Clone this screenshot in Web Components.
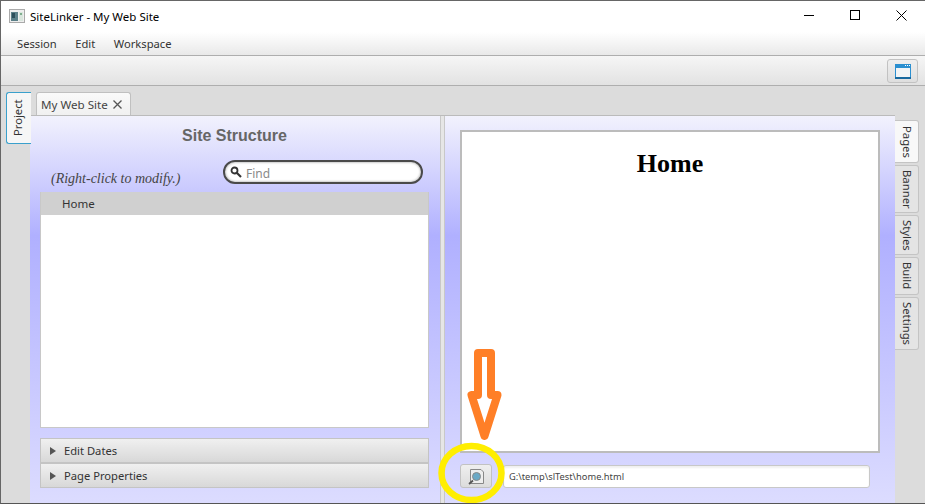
<!DOCTYPE html>
<html>
<head>
<meta charset="utf-8">
<title>SiteLinker</title>
<style>
    html, body { margin: 0; padding: 0; width: 925px; height: 504px; overflow: hidden; background: #dcdcdc; }
    body { font-family: "Noto Sans", "Open Sans", sans-serif; font-size: 12px; color: #333; }
</style>
</head>
<body>
<app-window></app-window>
<script>
function define(name, html) {
    customElements.define(name, class extends HTMLElement {
        constructor() {
            super();
            this.attachShadow({ mode: 'open' }).innerHTML = html;
        }
    });
}

define('title-bar', `
<style>
    :host { display: flex; align-items: center; height: 31px; background: #fff; color: #000; font-size: 11.5px; padding-left: 8px; padding-right: 1px; }
    .name { margin-left: 5px; flex: 1; }
    svg { display: block; }
    .logo { position: relative; top: -1px; }
    .btn { width: 46px; display: flex; justify-content: center; position: relative; top: -1px; }
</style>
<svg class="logo" width="16" height="14" viewBox="0 0 16 14">
    <rect x=".5" y=".5" width="15" height="13" fill="#eee" stroke="#aaa"/>
    <rect x="2" y="3" width="7" height="9" fill="#5b7f88"/>
    <rect x="3" y="4" width="3" height="5" fill="#2c4e5a"/>
    <rect x="10" y="3" width="4" height="9" fill="#d9e6dd"/>
    <rect x="11" y="4" width="2" height="2" fill="#7fae8f"/>
</svg>
<span class="name">SiteLinker - My Web Site</span>
<span class="btn"><svg width="11" height="11" viewBox="0 0 11 11"><path d="M0 5.5H10" stroke="#000"/></svg></span>
<span class="btn"><svg width="11" height="11" viewBox="0 0 11 11"><rect x=".5" y=".5" width="9" height="9" fill="none" stroke="#000"/></svg></span>
<span class="btn"><svg width="11" height="11" viewBox="0 0 11 11"><path d="M.5 .5L10.5 10.5M10.5 .5L.5 10.5" stroke="#000" fill="none"/></svg></span>
`);

define('menu-bar', `
<style>
    :host { display: flex; gap: 18.5px; align-items: center; height: 23px; padding-left: 16px; background: linear-gradient(#fff, #e9e9e9); border-bottom: 1px solid #aeaeae; font-size: 11.2px; color: #333; }
</style>
<slot></slot>
`);

define('tool-bar', `
<style>
    :host { display: flex; justify-content: flex-end; align-items: center; height: 29px; padding-right: 7px; background: linear-gradient(#f6f6f6, #e2e2e2); border-bottom: 1px solid #aeaeae; }
    button { width: 31px; height: 24px; margin-top: 1px; padding: 0; display: flex; align-items: center; justify-content: center; border: 1px solid #c2c2c2; border-radius: 3px; background: linear-gradient(#efefef, #dedede); }
</style>
<button>
    <svg width="16" height="15" viewBox="0 0 16 15">
        <rect width="16" height="15" fill="#2b8fd0"/>
        <rect x="1" y="4" width="14" height="9" fill="#f1f4f6"/>
        <rect x="0" y="13" width="16" height="2" fill="#17699f"/>
        <rect x="10" y="1" width="1" height="1" fill="#fff"/><rect x="12" y="1" width="1" height="1" fill="#fff"/><rect x="14" y="1" width="1" height="1" fill="#fff"/>
    </svg>
</button>
`);

define('side-tab', `
<style>
    :host { display: block; box-sizing: border-box; width: 24px; writing-mode: vertical-rl; text-align: center; font-size: 11.3px; color: #333; background: #e4e4e4; border: 1px solid #c4c4c4; border-left: 0; border-radius: 0 3px 3px 0; line-height: 22px; }
    :host([active]) { background: #f8f8f8; }
</style>
<slot></slot>
`);

define('project-tab', `
<style>
    :host { display: block; box-sizing: border-box; width: 25px; height: 52px; margin: 6px 0 0 5px; background: #f6f6f6; writing-mode: vertical-rl; transform: rotate(180deg); border: 1px solid #3aa0cc; border-left: 0; border-radius: 0 3px 3px 0; text-align: center; font-size: 11.2px; line-height: 22px; color: #333; }
</style>
<slot></slot>
`);

define('doc-tab', `
<style>
    :host { display: inline-flex; align-items: center; box-sizing: border-box; height: 23px; margin: 6px 0 0 6px; padding: 0 8px 0 4px; gap: 5px; background: linear-gradient(#fafafa, #f0f0f0); border: 1px solid #c0c0c0; border-bottom: 0; border-radius: 3px 3px 0 0; font-size: 11.6px; color: #444; }
    svg { display: block; }
</style>
<slot></slot>
<svg width="9" height="9" viewBox="0 0 9 9"><path d="M.5 .5L8.5 8.5M8.5 .5L.5 8.5" stroke="#555" stroke-width="1.3" fill="none"/></svg>
`);

define('find-box', `
<style>
    :host { display: flex; align-items: center; box-sizing: border-box; width: 200px; height: 24px; padding-left: 5px; gap: 4px; background: #fff; border: 2px solid #4a4a4a; border-radius: 12px; box-shadow: inset 0 0 2px 1px #ccc; font-size: 12px; color: #8a8a8a; }
    svg { display: block; }
    span { position: relative; top: 1px; }
</style>
<svg width="12" height="12" viewBox="0 0 12 12"><circle cx="4.5" cy="4.5" r="3" fill="none" stroke="#333" stroke-width="1.8"/><path d="M7 7L11 11" stroke="#333" stroke-width="2.2"/></svg>
<span>Find</span>
`);

define('tree-list', `
<style>
    :host { display: block; flex: 1; box-sizing: border-box; background: #fff; border: 1px solid #c8c8c8; border-top: 0; }
    .row { height: 23px; line-height: 23px; padding-left: 21px; background: #d0d0d0; font-size: 11.5px; color: #333; }
</style>
<div class="row"><slot></slot></div>
`);

define('fold-pane', `
<style>
    :host { display: flex; align-items: center; box-sizing: border-box; height: 25px; padding-left: 9px; gap: 8px; background: linear-gradient(#f0f0f0, #d8d8d8); border: 1px solid #c4c4c4; font-size: 11.2px; color: #333; }
    i { width: 0; height: 0; border-left: 6px solid #555; border-top: 4px solid transparent; border-bottom: 4px solid transparent; }
</style>
<i></i><slot></slot>
`);

define('structure-panel', `
<style>
    :host { display: flex; flex-direction: column; box-sizing: border-box; width: 410px; padding: 10px 11px 15px 10px; background: linear-gradient(#f2f2fd 0, #b0b0ff 120px, #dcdcff 100%); }
    h2 { margin: 0; text-align: center; font: bold 16px/20px "Liberation Sans", sans-serif; color: #666; }
    .tools { display: flex; justify-content: space-between; align-items: flex-end; height: 46px; padding: 0 6px 8px 11px; box-sizing: border-box; }
    em { font: italic 14px/16px "Liberation Serif", serif; color: #444; position: relative; top: 3px; }
    .folds { margin-top: 10px; display: flex; flex-direction: column; }
</style>
<h2>Site Structure</h2>
<div class="tools"><em>(Right-click to modify.)</em><find-box></find-box></div>
<tree-list>Home</tree-list>
<div class="folds"><fold-pane>Edit Dates</fold-pane><fold-pane>Page Properties</fold-pane></div>
`);

define('preview-panel', `
<style>
    :host { display: flex; flex-direction: column; box-sizing: border-box; width: 450px; padding: 14px 15px 15px 15px; background: linear-gradient(#f2f2fd 0, #b0b0ff 120px, #dcdcff 100%); }
    .page { flex: 1; box-sizing: border-box; background: #fff; border: 2px solid #bcbcbc; text-align: center; }
    h1 { margin: 17px 0 0; font: bold 26px/30px "Liberation Serif", serif; color: #000; }
    .bar { display: flex; align-items: center; margin-top: 11px; height: 24px; padding-right: 10px; }
    button { width: 32px; height: 24px; padding: 0; display: flex; align-items: center; justify-content: center; border: 1px solid #c2c2c2; border-radius: 3px; background: linear-gradient(#efefef, #dcdcdc); }
    .addr { flex: 1; box-sizing: border-box; height: 23px; margin-left: 11px; padding-left: 5px; line-height: 22px; background: #fff; border: 1px solid #c8c8c8; border-radius: 3px; box-shadow: inset 0 2px 2px #f0f0f0; font-size: 9.3px; color: #444; }
</style>
<div class="page"><h1>Home</h1></div>
<div class="bar">
    <button>
        <svg width="17" height="17" viewBox="0 0 17 17">
            <path d="M2.5 1.5H13L15.5 4V15.5H2.5Z" fill="#eeeeee" stroke="#888"/>
            <circle cx="8.5" cy="8.5" r="4" fill="#6aa9c6" stroke="#888"/>
            <path d="M5 12.5L1 16" stroke="#555" stroke-width="1.8"/>
        </svg>
    </button>
    <div class="addr">G:\\temp\\slTest\\home.html</div>
</div>
`);

define('app-window', `
<style>
    :host { display: flex; flex-direction: column; position: relative; box-sizing: border-box; width: 925px; height: 504px; border-top: 1px solid #666; border-left: 1px solid #666; border-bottom: 1px solid #555; background: #dcdcdc; overflow: hidden; }
    .body { flex: 1; display: flex; min-height: 0; }
    .left { width: 29px; flex: none; background: #dcdcdc; }
    .main { flex: 1; display: flex; flex-direction: column; min-width: 0; }
    .tabs { height: 30px; flex: none; box-sizing: border-box; border-bottom: 1px solid #bbb; }
    .split { flex: 1; display: flex; min-height: 0; }
    .divider { width: 5px; flex: none; background: #e6e6e6; border-left: 1px solid #c8c8c8; border-right: 1px solid #c8c8c8; box-sizing: border-box; }
    .right { width: 30px; flex: none; display: flex; flex-direction: column; gap: 2px; padding-top: 34px; box-sizing: border-box; background: #dcdcdc; }
    .over { position: absolute; left: -1px; top: -1px; pointer-events: none; }
</style>
<title-bar></title-bar>
<menu-bar><span>Session</span><span>Edit</span><span>Workspace</span></menu-bar>
<tool-bar></tool-bar>
<div class="body">
    <div class="left"><project-tab>Project</project-tab></div>
    <div class="main">
        <div class="tabs"><doc-tab>My Web Site</doc-tab></div>
        <div class="split">
            <structure-panel></structure-panel>
            <div class="divider"></div>
            <preview-panel></preview-panel>
        </div>
    </div>
    <div class="right">
        <side-tab active style="height:43px">Pages</side-tab>
        <side-tab style="height:48px">Banner</side-tab>
        <side-tab style="height:40px">Styles</side-tab>
        <side-tab style="height:38px">Build</side-tab>
        <side-tab style="height:53px">Settings</side-tab>
    </div>
</div>
<svg class="over" width="925" height="504" viewBox="0 0 925 504">
    <ellipse cx="471.5" cy="473" rx="30" ry="27" fill="none" stroke="#ffee00" stroke-width="6.5"/>
    <path d="M478 353H491V395H497.5L484.5 436L471.5 395H478Z" fill="none" stroke="#ff7f27" stroke-width="8" stroke-linejoin="round"/>
</svg>
`);
</script>
</body>
</html>
